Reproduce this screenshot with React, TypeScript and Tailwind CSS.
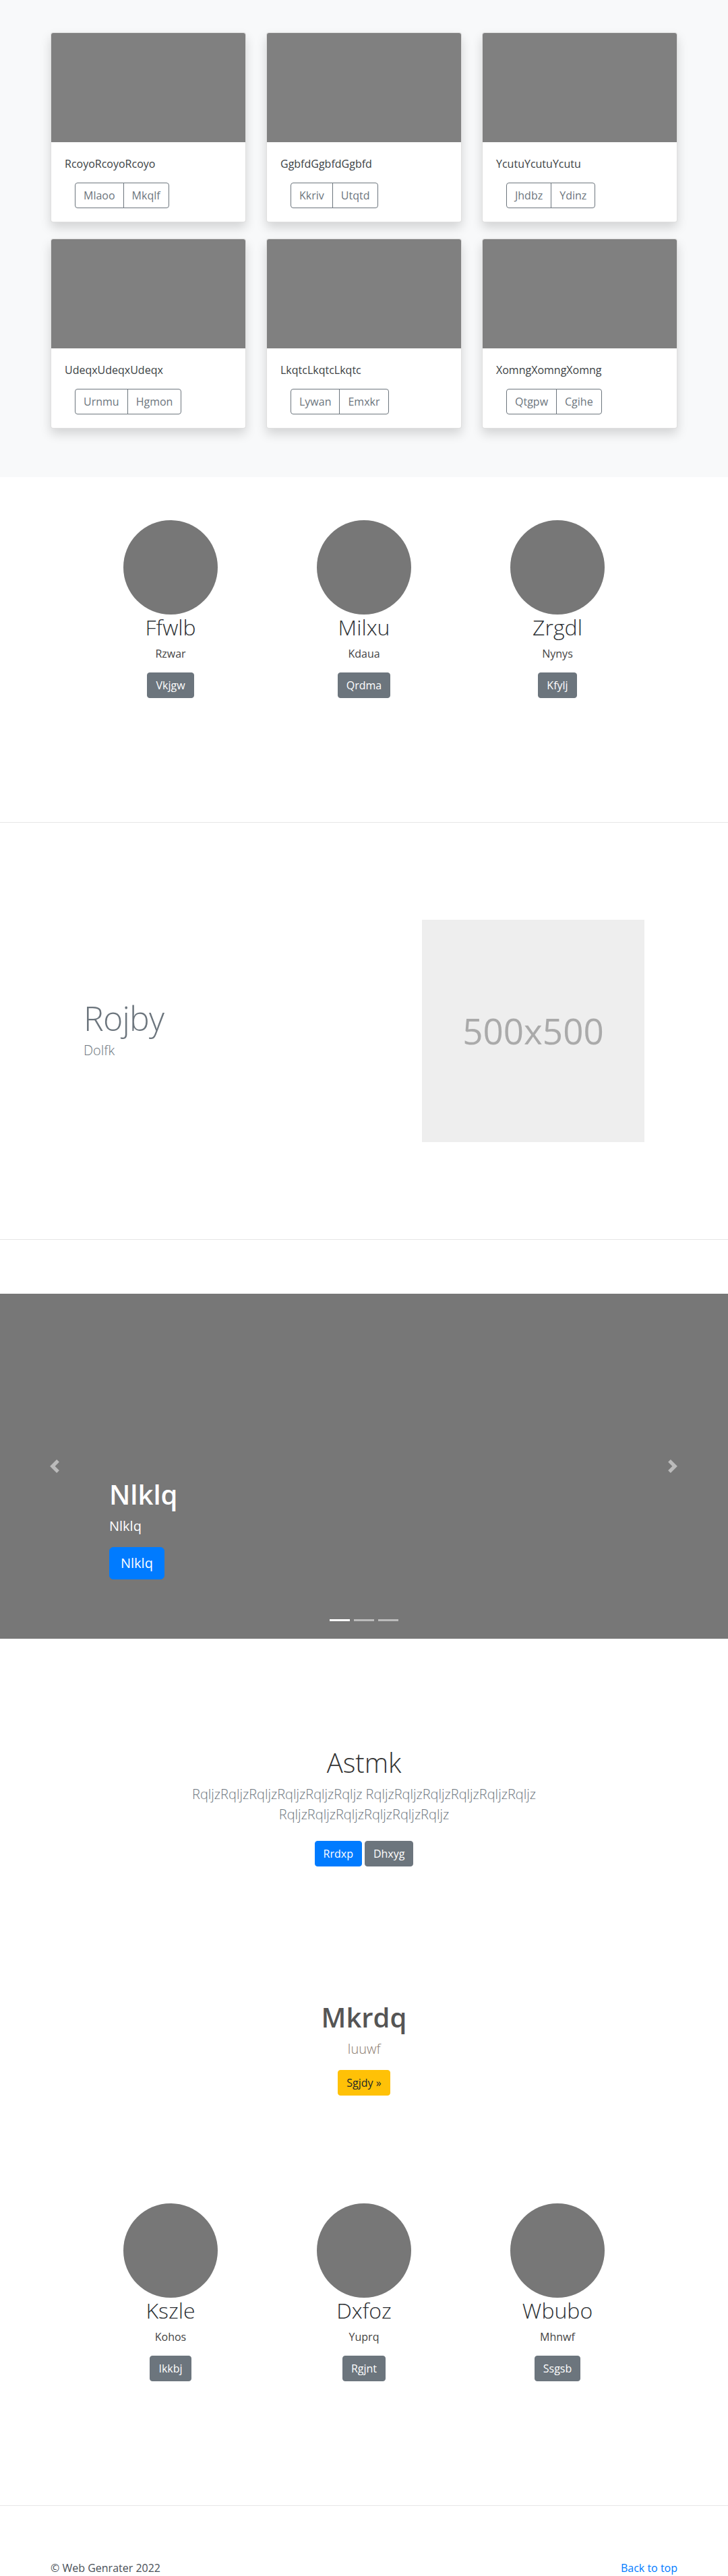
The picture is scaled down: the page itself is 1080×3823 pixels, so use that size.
const albumCards = [
  { title: "RcoyoRcoyoRcoyo", left: "Mlaoo", right: "Mkqlf" },
  { title: "GgbfdGgbfdGgbfd", left: "Kkriv", right: "Utqtd" },
  { title: "YcutuYcutuYcutu", left: "Jhdbz", right: "Ydinz" },
  { title: "UdeqxUdeqxUdeqx", left: "Urnmu", right: "Hgmon" },
  { title: "LkqtcLkqtcLkqtc", left: "Lywan", right: "Emxkr" },
  { title: "XomngXomngXomng", left: "Qtgpw", right: "Cgihe" },
];

const teamTop = [
  { name: "Ffwlb", sub: "Rzwar", btn: "Vkjgw" },
  { name: "Milxu", sub: "Kdaua", btn: "Qrdma" },
  { name: "Zrgdl", sub: "Nynys", btn: "Kfylj" },
];

const teamBottom = [
  { name: "Kszle", sub: "Kohos", btn: "Ikkbj" },
  { name: "Dxfoz", sub: "Yuprq", btn: "Rgjnt" },
  { name: "Wbubo", sub: "Mhnwf", btn: "Ssgsb" },
];

interface CardProps {
  title: string;
  left: string;
  right: string;
}

const AlbumCard = ({ title, left, right }: CardProps) => {
  return (
    <div className="overflow-hidden rounded-[4px] border border-black/[0.125] bg-white shadow-[0_8px_16px_rgba(0,0,0,0.15)]">
      <div className="h-[162px] bg-[#808080]" />
      <div className="p-5">
        <p className="mb-4 text-base leading-6 text-[#3b3f44]">{title}</p>
        <div className="ml-[15px] flex">
          <button className="rounded-l-[4px] border border-[#6c757d] px-3 py-[6px] text-base leading-6 text-[#6c757d]">
            {left}
          </button>
          <button className="-ml-px rounded-r-[4px] border border-[#6c757d] px-3 py-[6px] text-base leading-6 text-[#6c757d]">
            {right}
          </button>
        </div>
      </div>
    </div>
  );
};

interface MemberProps {
  name: string;
  sub: string;
  btn: string;
}

const Member = ({ name, sub, btn }: MemberProps) => {
  return (
    <div className="flex flex-col items-center text-center">
      <div className="h-[140px] w-[140px] rounded-full bg-[#777777]" />
      <h2 className="mb-2 text-[32px] leading-[1.2] font-light text-[#2b2f33]">{name}</h2>
      <p className="mb-4 text-base leading-6 text-[#444444]">{sub}</p>
      <button className="rounded-[4px] border border-[#6c757d] bg-[#6c757d] px-3 py-[6px] text-base leading-6 text-white">
        {btn}
      </button>
    </div>
  );
};

const TeamRow = ({ members }: { members: MemberProps[] }) => {
  return (
    <div className="mx-auto grid w-[861px] grid-cols-3">
      {members.map((m, index) => (
        <Member key={index} {...m} />
      ))}
    </div>
  );
};

const Divider = () => <div className="h-px bg-[#e6e6e6]" />;

const Chevron = ({ flip }: { flip?: boolean }) => (
  <svg
    width="20"
    height="20"
    viewBox="0 0 8 8"
    fill="#ffffff"
    className={flip ? "rotate-180 opacity-50" : "opacity-50"}
  >
    <path d="M5.25 0l-4 4 4 4 1.5-1.5L4.25 4l2.5-2.5L5.25 0z" />
  </svg>
);

export default function App() {
  return (
    <div className="min-h-screen bg-white font-['Open_Sans','Noto_Sans',sans-serif] text-[#212529]">
      {/* album */}
      <section className="bg-[#f8f9fa] pt-12 pb-[72px]">
        <div className="mx-auto grid w-[930px] grid-cols-3 gap-x-[30px] gap-y-6">
          {albumCards.map((card, index) => (
            <AlbumCard key={index} {...card} />
          ))}
        </div>
      </section>

      {/* team */}
      <section className="h-[512px] pt-16">
        <TeamRow members={teamTop} />
      </section>

      <Divider />

      {/* featurette */}
      <section className="flex items-center px-[124px] py-[144px]">
        <div className="flex-1">
          <h2 className="mb-2 text-[50px] leading-none font-light tracking-[-0.8px] text-[#6c757d]">Rojby</h2>
          <p className="text-[20px] leading-[1.5] font-light text-[#6c757d]">Dolfk</p>
        </div>
        <div className="flex h-[330px] w-[330px] items-center justify-center bg-[#eeeeee] text-[53px] text-[#aaaaaa]">
          500x500
        </div>
      </section>

      <Divider />

      {/* carousel */}
      <section className="relative mt-20 flex h-[512px] flex-col justify-end bg-[#777777] pb-[88px] pl-[162px]">
        <h1 className="mb-2 text-[40px] leading-[1.2] font-semibold text-white">Nlklq</h1>
        <p className="mb-4 text-[20px] leading-[1.5] text-white">Nlklq</p>
        <div>
          <button className="rounded-[6px] border border-[#007bff] bg-[#007bff] px-4 py-2 text-[20px] leading-[1.5] text-white">
            Nlklq
          </button>
        </div>
        <div className="absolute top-1/2 left-[71px] -translate-y-1/2">
          <Chevron />
        </div>
        <div className="absolute top-1/2 right-[72px] -translate-y-1/2">
          <Chevron flip />
        </div>
        <div className="absolute bottom-[26px] left-1/2 flex -translate-x-1/2 gap-[6px]">
          <span className="h-[3px] w-[30px] bg-white" />
          <span className="h-[3px] w-[30px] bg-white/50" />
          <span className="h-[3px] w-[30px] bg-white/50" />
        </div>
      </section>

      {/* jumbotron */}
      <section className="pt-[160px] text-center">
        <h1 className="mb-2 text-[40px] leading-[1.2] font-light text-[#333333]">Astmk</h1>
        <p className="mx-auto mb-4 max-w-[600px] text-[20px] leading-[1.5] font-light text-[#6c757d]">
          RqljzRqljzRqljzRqljzRqljzRqljz RqljzRqljzRqljzRqljzRqljzRqljz RqljzRqljzRqljzRqljzRqljzRqljz
        </p>
        <div className="flex justify-center gap-1 py-2">
          <button className="rounded-[4px] border border-[#007bff] bg-[#007bff] px-3 py-[6px] text-base leading-6 text-white">
            Rrdxp
          </button>
          <button className="rounded-[4px] border border-[#6c757d] bg-[#6c757d] px-3 py-[6px] text-base leading-6 text-white">
            Dhxyg
          </button>
        </div>
      </section>

      {/* call to action */}
      <section className="mt-[192px] text-center">
        <h1 className="mb-2 text-[40px] leading-[1.2] font-semibold text-[#555555]">Mkrdq</h1>
        <p className="mb-4 text-[20px] leading-[1.5] font-light text-[#8a7a6e]">Iuuwf</p>
        <button className="rounded-[4px] border border-[#ffc107] bg-[#ffc107] px-3 py-[6px] text-base leading-6 text-[#212529]">
          Sgjdy »
        </button>
      </section>

      {/* team 2 */}
      <section className="mt-[160px]">
        <TeamRow members={teamBottom} />
      </section>

      <div className="mt-[184px]">
        <Divider />
      </div>

      <footer className="mx-auto flex w-[930px] justify-between pt-20 pb-4 text-base leading-6">
        <p className="text-[#495057]">© Web Genrater 2022</p>
        <a href="#" className="text-[#007bff]">
          Back to top
        </a>
      </footer>
    </div>
  );
}
